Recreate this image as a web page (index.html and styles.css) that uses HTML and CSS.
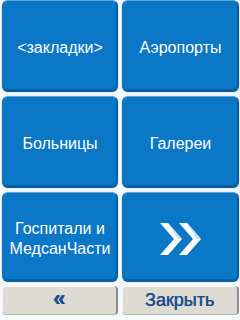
FILE: index.html
```html
<!DOCTYPE html>
<html lang="ru">
<head>
  <meta charset="UTF-8">
  <title>Закладки</title>
  <link rel="stylesheet" href="styles.css">
</head>
<body>
  <div class="screen">
    <div class="grid">
      <div class="tile">&lt;закладки&gt;</div>
      <div class="tile">Аэропорты</div>
      <div class="tile">Больницы</div>
      <div class="tile">Галереи</div>
      <div class="tile">Госпитали и<br>МедсанЧасти</div>
      <div class="tile">
        <svg width="46" height="34" viewBox="0 0 46 34">
          <path d="M2 1 L10 1 L24 17 L10 33 L2 33 L16 17 Z" fill="#fff"/>
          <path d="M21 1 L29 1 L43 17 L29 33 L21 33 L35 17 Z" fill="#fff"/>
          <path d="M10 1 L24 17 L20 17 Z M29 1 L43 17 L39 17 Z" fill="#c9def0"/>
        </svg>
      </div>
    </div>
    <div class="bar">
      <div class="btn back">&laquo;</div>
      <div class="btn">Закрыть</div>
    </div>
  </div>
</body>
</html>
```

FILE: styles.css
```css
body {
  margin: 0;
  padding: 0;
  background-color: #f6f9fb;
  font-family: "Liberation Sans", Arial, sans-serif;
}

.screen {
  width: 240px;
  height: 320px;
  display: flex;
  flex-direction: column;
}

.grid {
  display: grid;
  grid-template-columns: 116px 117px;
  grid-template-rows: 92px 92px 90px;
  column-gap: 4px;
  row-gap: 4px;
  padding: 0 1px 0 2px;
}

.tile {
  display: flex;
  align-items: center;
  justify-content: center;
  text-align: center;
  color: #fff;
  font-size: 16px;
  line-height: 20px;
  padding-top: 4px;
  box-sizing: border-box;
  background-color: #0a78c6;
  border: 1px solid #0b5d9a;
  border-top-color: #5aa6dc;
  border-left-color: #1c70b0;
  border-radius: 6px;
  box-shadow: inset 0 -2px 0 #0b5f9e, inset -1px 0 0 #0b5f9e, 0 0 2px #a8d2f0;
}

.bar {
  display: flex;
  gap: 4px;
  padding: 4px 0 0 2px;
}

.btn {
  height: 29px;
  box-sizing: border-box;
  display: flex;
  align-items: center;
  justify-content: center;
  color: #1d4f8e;
  font-size: 18px;
  background-color: #dedbd3;
  border-radius: 4px;
  border-right: 2px solid #8e8c86;
  border-bottom: 1px solid #b8b5ad;
  box-shadow: inset 1px 1px 0 #f4f3ef;
  text-shadow: 0.5px 0 0 #1d4f8e;
}

.btn:first-child {
  width: 116px;
}

.btn:last-child {
  width: 117px;
}

.back {
  font-size: 22px;
  font-weight: bold;
  padding-bottom: 3px;
}
```
